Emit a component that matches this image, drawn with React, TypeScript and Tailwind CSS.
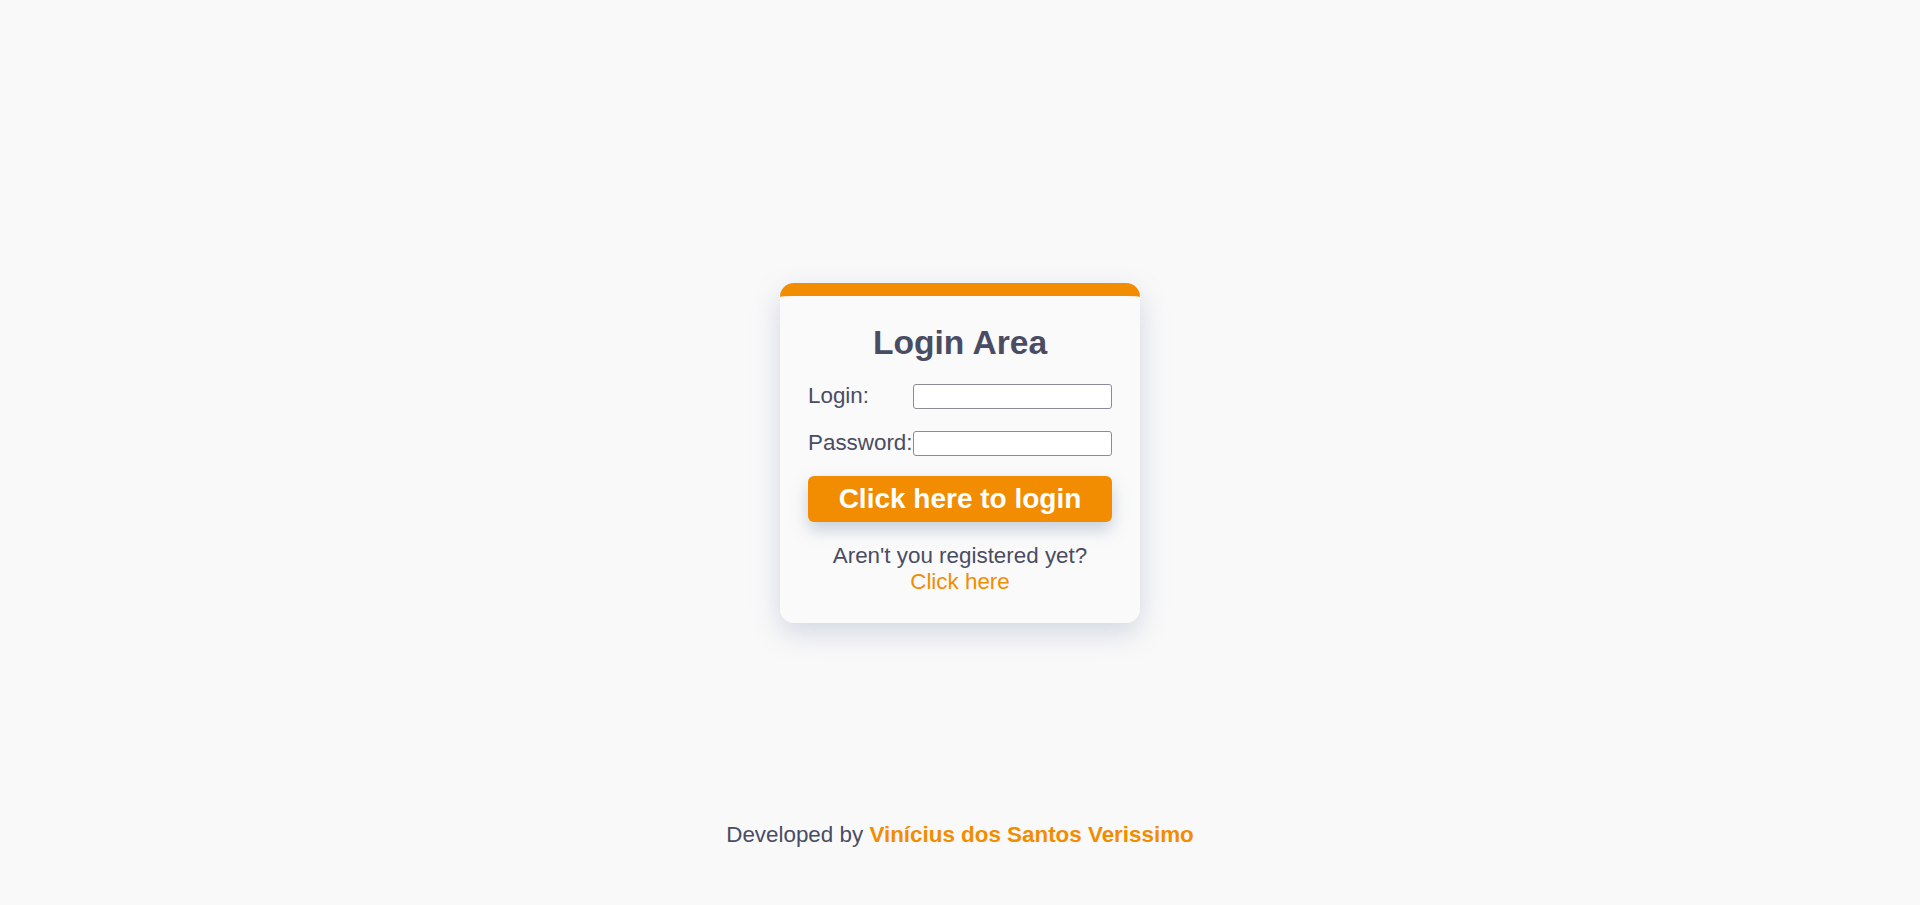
import { useState } from "react";

export default function App() {
  const [login, setLogin] = useState("");
  const [password, setPassword] = useState("");

  const inputClass =
    "h-[25px] w-full rounded-[3px] border border-[#8b8b99] bg-white px-1 text-[15px] outline-none";
  const labelClass = "text-[22.4px] leading-6 text-[#4a4c63]";

  return (
    <div
      className="grid min-h-screen grid-rows-[1fr_auto_1fr] bg-[#f9f9f9] text-[#4a4c63]"
      style={{ fontFamily: '"Liberation Sans", Arial, sans-serif' }}
    >
      <div />
      <main className="flex justify-center">
        <form
          onSubmit={(e) => e.preventDefault()}
          className="flex w-[360px] flex-col rounded-[14px] border-t-[13px] border-[#f28c00] bg-[#fafafa] px-7 pt-7 pb-7 shadow-[0_10px_28px_rgba(110,130,170,0.28)]"
        >
          <h1 className="text-center text-[33.6px] leading-[38px] font-bold text-[#4a4c63]">
            Login Area
          </h1>

          <div className="mt-[22px] grid grid-cols-[105px_1fr] items-center gap-y-[22px]">
            <label className={labelClass}>Login:</label>
            <input
              type="text"
              value={login}
              onChange={(e) => setLogin(e.target.value)}
              className={inputClass}
            />
            <label className={labelClass}>Password:</label>
            <input
              type="password"
              value={password}
              onChange={(e) => setPassword(e.target.value)}
              className={inputClass}
            />
          </div>

          <button
            type="submit"
            className="mt-5 h-[46px] rounded-md bg-[#f28c00] text-[28px] font-bold text-white shadow-[0_8px_16px_rgba(110,130,170,0.35)]"
          >
            Click here to login
          </button>

          <p className="mt-[21px] text-center text-[22.4px] leading-[26px]">
            Aren't you registered yet?
            <br />
            <a href="#" className="text-[#f28c00]">
              Click here
            </a>
          </p>
        </form>
      </main>
      <footer className="flex items-end justify-center pb-[58px]">
        <p className="text-[22.4px] leading-6">
          Developed by{" "}
          <a href="#" className="font-bold text-[#f28c00]">
            Vinícius dos Santos Verissimo
          </a>
        </p>
      </footer>
    </div>
  );
}
